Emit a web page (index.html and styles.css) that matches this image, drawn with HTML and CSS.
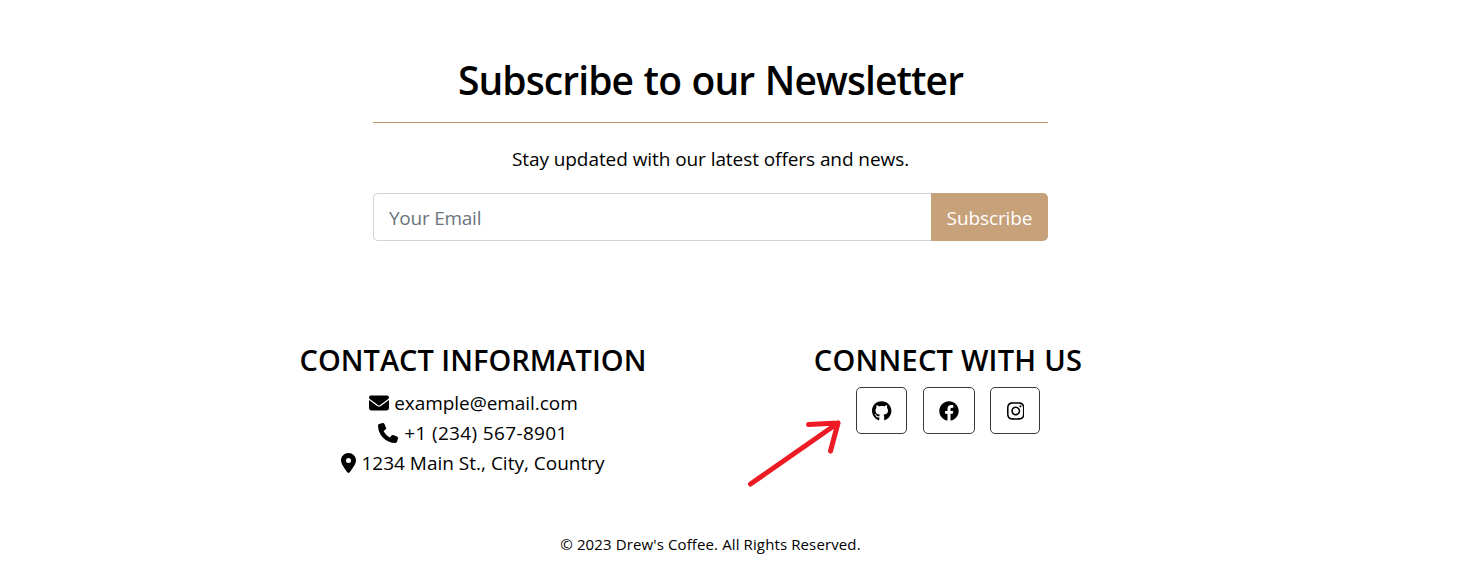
FILE: index.html
```html
<!DOCTYPE html>
<html lang="en">
<head>
<meta charset="utf-8">
<title>Drew's Coffee</title>
<link rel="stylesheet" href="styles.css">
</head>
<body>
<div class="page">
  <section class="newsletter">
    <h2 class="newsletter-title">Subscribe to our Newsletter</h2>
    <p class="newsletter-text">Stay updated with our latest offers and news.</p>
    <form class="newsletter-form">
      <input class="email" type="email" placeholder="Your Email" aria-label="Your Email">
      <button class="subscribe" type="button">Subscribe</button>
    </form>
  </section>
  <footer class="footer">
    <div class="columns">
      <section class="column">
        <h3 class="column-title contact-title">CONTACT INFORMATION</h3>
        <ul class="contact">
          <li class="mail"><svg class="icon" width="20" height="20" viewBox="0 0 512 512"><path d="M48 64C21.500 64 0 85.500 0 112c0 15.100 7.100 29.300 19.200 38.400L236.800 313.600c11.400 8.500 27 8.500 38.400 0L492.800 150.400c12.100-9.100 19.200-23.300 19.200-38.400 0-26.500-21.500-48-48-48H48zM0 176V384c0 35.300 28.700 64 64 64H448c35.300 0 64-28.700 64-64V176L294.400 339.200c-22.800 17.100-54 17.100-76.800 0L0 176z"/></svg><span>example@email.com</span></li>
          <li class="phone"><svg class="icon" width="20" height="20" viewBox="0 0 512 512"><path d="M164.900 24.600c-7.700-18.600-28-28.500-47.400-23.200l-88 24C12.100 30.200 0 46 0 64 0 311.400 200.600 512 448 512c18 0 33.800-12.100 38.600-29.500l24-88c5.300-19.400-4.600-39.700-23.200-47.400l-96-40c-16.300-6.800-35.200-2.100-46.300 11.600L304.700 368C234.300 334.700 177.300 277.700 144 207.300L193.300 167c13.700-11.200 18.400-30 11.600-46.300l-40-96z"/></svg><span>+1 (234) 567-8901</span></li>
          <li class="address"><svg class="icon" width="15" height="20" viewBox="0 0 384 512"><path d="M215.700 499.200C267 435 384 279.400 384 192 384 86 298 0 192 0S0 86 0 192c0 87.400 117 243 168.300 307.200 12.300 15.300 35.100 15.300 47.400 0zM192 128a64 64 0 1 1 0 128 64 64 0 1 1 0-128z"/></svg><span>1234 Main St., City, Country</span></li>
        </ul>
      </section>
      <section class="column">
        <h3 class="column-title connect-title">CONNECT WITH US</h3>
        <div class="social">
          <a class="social-link github" aria-label="GitHub"><svg width="19.400" height="20" viewBox="0 0 496 512"><path d="M165.900 397.400c0 2-2.300 3.600-5.200 3.600-3.300.3-5.600-1.300-5.600-3.600 0-2 2.300-3.600 5.200-3.600 3-.3 5.600 1.300 5.600 3.600zm-31.100-4.500c-.7 2 1.300 4.300 4.300 4.900 2.600 1 5.600 0 6.200-2s-1.300-4.300-4.300-5.200c-2.600-.7-5.500.3-6.200 2.300zm44.200-1.700c-2.900.7-4.900 2.600-4.600 4.900.3 2 2.900 3.300 5.900 2.600 2.900-.7 4.900-2.600 4.600-4.600-.3-1.900-3-3.200-5.900-2.900zM244.800 8C106.100 8 0 113.300 0 252c0 110.900 69.800 205.800 169.500 239.200 12.800 2.300 17.300-5.600 17.300-12.100 0-6.200-.3-40.400-.3-61.400 0 0-70 15-84.700-29.800 0 0-11.400-29.100-27.800-36.600 0 0-22.900-15.700 1.600-15.400 0 0 24.900 2 38.600 25.800 21.900 38.600 58.600 27.500 72.900 20.900 2.300-16 8.800-27.100 16-33.700-55.900-6.200-112.300-14.300-112.300-110.500 0-27.500 7.600-41.300 23.600-58.900-2.600-6.500-11.100-33.300 2.600-67.900 20.900-6.500 69 27 69 27 20-5.600 41.500-8.500 62.800-8.500s42.800 2.900 62.800 8.500c0 0 48.100-33.600 69-27 13.700 34.700 5.200 61.400 2.600 67.900 16 17.700 25.800 31.500 25.800 58.900 0 96.500-58.900 104.200-114.800 110.500 9.200 7.900 17 22.900 17 46.400 0 33.700-.3 75.400-.3 83.600 0 6.500 4.600 14.400 17.300 12.100C428.200 457.800 496 362.900 496 252 496 113.300 383.500 8 244.800 8z"/></svg></a>
          <a class="social-link facebook" aria-label="Facebook"><svg width="20" height="20" viewBox="0 0 512 512"><path d="M504 256C504 119 393 8 256 8S8 119 8 256c0 123.800 90.700 226.400 209.300 245V327.700h-63V256h63v-54.600c0-62.200 37-96.500 93.700-96.500 27.100 0 55.500 4.800 55.500 4.800v61h-31.300c-30.800 0-40.400 19.100-40.400 38.700V256h68.800l-11 71.700h-57.800V501C413.300 482.400 504 379.800 504 256z"/></svg></a>
          <a class="social-link instagram" aria-label="Instagram"><svg width="17.500" height="20" viewBox="0 0 448 512"><path d="M224.100 141c-63.600 0-114.900 51.300-114.900 114.900s51.300 114.900 114.900 114.900S339 319.500 339 255.900 287.700 141 224.100 141zm0 189.600c-41.100 0-74.700-33.500-74.700-74.700s33.500-74.700 74.700-74.700 74.700 33.500 74.700 74.700-33.600 74.700-74.700 74.700zm146.400-194.300c0 14.900-12 26.800-26.800 26.800-14.900 0-26.800-12-26.800-26.800s12-26.800 26.800-26.800 26.800 12 26.800 26.800zm76.100 27.200c-1.700-35.900-9.900-67.700-36.200-93.900-26.200-26.200-58-34.400-93.900-36.200-37-2.100-147.900-2.100-184.900 0-35.800 1.700-67.600 9.900-93.900 36.100s-34.400 58-36.200 93.900c-2.100 37-2.100 147.900 0 184.900 1.700 35.900 9.900 67.700 36.200 93.900s58 34.400 93.900 36.200c37 2.100 147.900 2.100 184.900 0 35.900-1.700 67.700-9.900 93.900-36.200 26.200-26.200 34.400-58 36.200-93.900 2.100-37 2.100-147.800 0-184.800zM398.800 388c-7.800 19.600-22.900 34.700-42.600 42.600-29.500 11.700-99.500 9-132.100 9s-102.700 2.600-132.100-9c-19.600-7.800-34.700-22.900-42.600-42.600-11.700-29.500-9-99.500-9-132.100s-2.600-102.700 9-132.100c7.800-19.600 22.900-34.700 42.600-42.600 29.500-11.700 99.500-9 132.100-9s102.700-2.600 132.100 9c19.600 7.800 34.700 22.900 42.600 42.600 11.700 29.500 9 99.500 9 132.100s2.700 102.700-9 132.100z"/></svg></a>
        </div>
      </section>
    </div>
    <p class="copyright">© 2023 Drew's Coffee. All Rights Reserved.</p>
  </footer>
  <svg class="arrow" width="100" height="74" viewBox="745 416 100 74"><path d="M750.500 484 838 423M808.500 424.500 838 423 830.500 451"/></svg>
</div>
</body>
</html>
```
FILE: styles.css
```css
* { box-sizing: border-box; }
body {
  margin: 0;
  background: #fff;
  color: #000;
  font-family: "Open Sans", "Noto Sans", sans-serif;
  font-size: 19px;
  line-height: 30px;
  overflow: hidden;
}
h2, h3, p, ul { margin: 0; padding: 0; }
.page { position: relative; width: 1421px; height: 563px; white-space: nowrap; }
.newsletter { width: 675px; margin: 0 auto; padding-top: 56px; text-align: center; }
.newsletter-title {
  height: 67px;
  border-bottom: 1px solid #be9566;
  font-size: 39px;
  line-height: 48px;
  font-weight: 600;
  letter-spacing: -0.9px;
  word-spacing: 1.3px;
}
.newsletter-text { margin-top: 21px; letter-spacing: -0.07px; }
.newsletter-form { display: flex; height: 48px; margin-top: 19px; }
.email {
  flex: 1;
  min-width: 0;
  border: 1px solid #ced4da;
  border-right: 0;
  border-radius: 5px 0 0 5px;
  padding: 2px 15px 0;
  font: inherit;
  letter-spacing: -0.25px;
}
.email::placeholder { color: #6c757d; opacity: 1; }
.subscribe {
  width: 117px;
  border: 0;
  border-radius: 0 5px 5px 0;
  padding: 2px 0 0;
  background: #c7a17a;
  color: #fff;
  font: inherit;
  letter-spacing: -0.1px;
}
.footer { padding-top: 101px; }
.columns { display: grid; grid-template-columns: 475px 475px; justify-content: center; text-align: center; }
.column-title { font-size: 29px; line-height: 36px; font-weight: 550; }
.connect-title { letter-spacing: 0.25px; }
.contact { list-style: none; margin-top: 10px; }
.contact li { display: flex; align-items: center; justify-content: center; gap: 5px; height: 30px; }
.contact .mail { letter-spacing: -0.05px; padding-left: 1px; }
.contact .phone { letter-spacing: 0.35px; gap: 6px; }
.icon { flex: none; }
.social { display: flex; justify-content: center; margin-top: 9px; }
.social-link {
  display: flex;
  align-items: center;
  justify-content: center;
  height: 47px;
  border: 1px solid #343a40;
  border-radius: 5px;
}
.github { width: 51px; margin-right: 16px; padding-left: 1px; }
.facebook { width: 52px; margin-right: 15px; }
.instagram { width: 50px; padding-left: 1px; }
.copyright { margin-top: 51px; font-size: 15px; text-align: center; letter-spacing: 0.12px; }
.arrow { position: absolute; left: 745px; top: 416px; fill: none; stroke: #ed1c24; stroke-width: 5; stroke-linecap: round; stroke-linejoin: round; }
```
